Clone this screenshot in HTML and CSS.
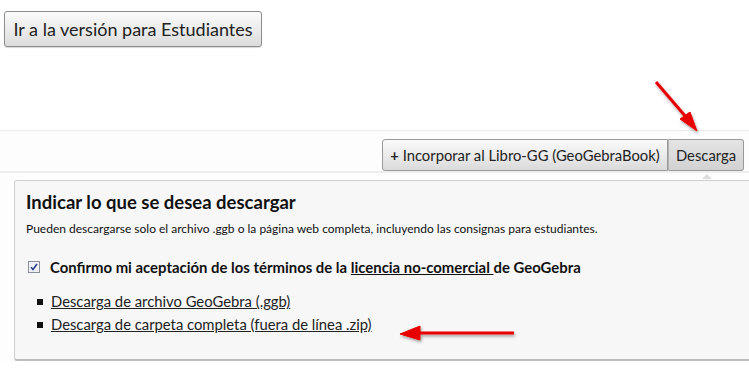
FILE: index.html
```html
<!DOCTYPE html>
<html lang="es">
<head>
    <meta charset="UTF-8">
    <title>Descarga</title>
    <link rel="stylesheet" href="styles.css">
</head>
<body>
    <div class="top">
        <button class="student-btn">Ir a la versión para Estudiantes</button>
    </div>

    <div class="area">
        <div class="toolbar">
            <button class="tab"><b>+</b> Incorporar al Libro-GG (GeoGebraBook)</button>
            <button class="tab active">Descarga</button>
        </div>

        <div class="panel">
            <h2>Indicar lo que se desea descargar</h2>
            <p class="info">Pueden descargarse solo el archivo .ggb o la página web completa, incluyendo las consignas para estudiantes.</p>
            <label class="accept">
                <span class="check">
                    <svg width="12" height="12" viewBox="0 0 12 12"><rect x="0.5" y="0.5" width="11" height="11" fill="#eef0f5" stroke="#8a8f9c"/><path d="M3 6.2 L5 8.5 L9 3" fill="none" stroke="#2b3f8c" stroke-width="1.6"/></svg>
                </span>
                <span>Confirmo mi aceptación de los términos de la <a href="#">licencia no-comercial&nbsp;</a>de GeoGebra</span>
            </label>
            <ul class="links">
                <li><a href="#">Descarga de archivo GeoGebra (.ggb)</a></li>
                <li><a href="#">Descarga de carpeta completa (fuera de línea .zip)</a></li>
            </ul>
        </div>
    </div>

    <svg class="arrows" width="749" height="371" viewBox="0 0 749 371">
        <defs>
            <filter id="sh" x="-20%" y="-20%" width="140%" height="140%">
                <feDropShadow dx="1" dy="2" stdDeviation="1.5" flood-color="#000" flood-opacity="0.35"/>
            </filter>
        </defs>
        <g filter="url(#sh)" fill="#e80000" stroke="#e80000">
            <line x1="656" y1="82" x2="686" y2="117" stroke-width="3"/>
            <polygon points="697,131 680,119 690,112" stroke-width="1"/>
            <line x1="514" y1="333" x2="418" y2="333" stroke-width="3"/>
            <polygon points="400,334 420,326 420,340" stroke-width="1"/>
        </g>
    </svg>
</body>
</html>
```

FILE: styles.css
```css
body {
    margin: 0;
    font-family: Lato, "Open Sans", sans-serif;
    color: #111;
    background: #fff;
    overflow: hidden;
    width: 749px;
    height: 371px;
}

.top {
    height: 130px;
    padding: 11px 0 0 4px;
    box-sizing: border-box;
}

.student-btn {
    width: 258px;
    height: 36px;
    font-family: Lato, sans-serif;
    font-size: 18px;
    color: #222;
    background: linear-gradient(#fbfbfb, #e9e9e9 60%, #dcdcdc);
    border: 1px solid #8d8d8d;
    border-radius: 3px;
    box-shadow: 0 1px 1px rgba(0, 0, 0, 0.15);
    padding: 0;
}

.area {
    border-top: 1px solid #ececec;
    background: #fdfdfd;
}

.toolbar {
    display: flex;
    justify-content: flex-end;
    padding: 8px 5px 0 0;
    border-bottom: 2px solid #eeeeee;
}

.tab {
    height: 32px;
    font-family: Lato, sans-serif;
    font-size: 14.8px;
    color: #222;
    white-space: nowrap;
    background: linear-gradient(#fafafa, #e8e8e8 60%, #dadada);
    border: 1px solid #9a9a9a;
    padding: 0;
    margin: 0;
}

.tab:first-child {
    width: 286px;
    border-radius: 3px 0 0 3px;
}

.tab.active {
    width: 76px;
    background: linear-gradient(#e4e4e4, #d2d2d2);
    border-left: 1px solid #b0b0b0;
    border-radius: 0 3px 3px 0;
    position: relative;
}

.tab.active::after {
    content: "";
    position: absolute;
    left: 33px;
    bottom: -9px;
    border: 5px solid transparent;
    border-bottom-color: #dddddd;
}

.panel {
    margin: 7px -10px 0 14px;
    height: 181px;
    box-sizing: border-box;
    background: #f7f7f7;
    border: 1px solid #cfcfcf;
    border-bottom: 2px solid #bdbdbd;
    border-radius: 3px 0 0 3px;
    padding: 9px 11px;
}

.panel h2 {
    margin: 0;
    font-size: 18.5px;
    font-weight: bold;
    color: #111;
    line-height: 24px;
}

.info {
    margin: 7px 0 0;
    font-size: 12px;
    line-height: 16px;
}

.accept {
    display: flex;
    align-items: center;
    margin-top: 21px;
    font-size: 14.9px;
    font-weight: bold;
    line-height: 18px;
}

.check {
    display: flex;
    margin: 0 10px 0 2px;
}

.accept a {
    color: #111;
    text-decoration: underline;
}

.links {
    margin: 14px 0 0;
    padding: 0 0 0 25px;
    list-style: none;
    font-size: 14.8px;
}

.links li {
    line-height: 23px;
    position: relative;
}

.links li::before {
    content: "";
    position: absolute;
    left: -14px;
    top: 9px;
    width: 6px;
    height: 6px;
    background: #111;
}

.links a {
    color: #222;
    text-decoration: underline;
}

.arrows {
    position: absolute;
    left: 0;
    top: 0;
    pointer-events: none;
}
```
